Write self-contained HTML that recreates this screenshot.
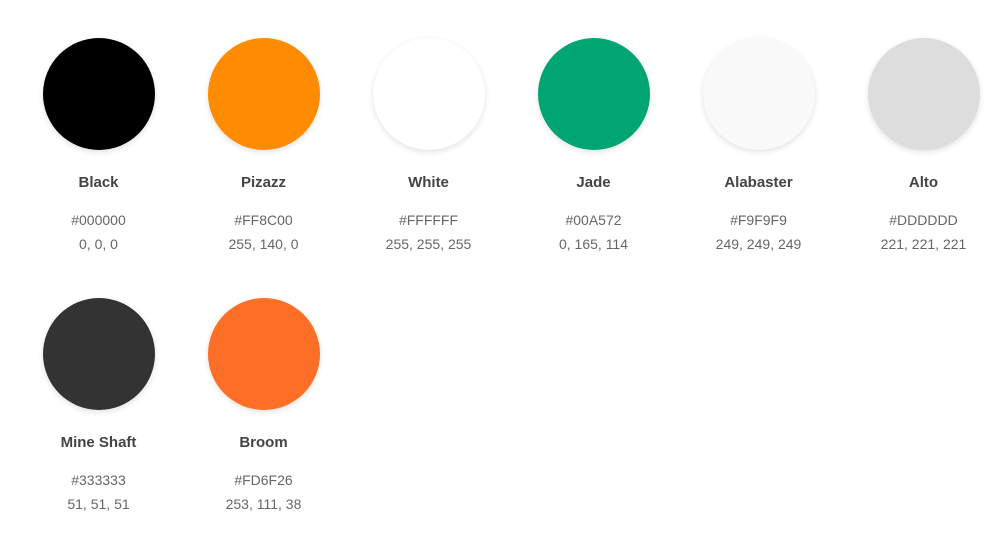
<!DOCTYPE html>
<html><head><style>
html,body{margin:0;background:#fff;width:1008px;height:536px;overflow:hidden;font-family:"Liberation Sans","DejaVu Sans",sans-serif}
.s{position:absolute;width:165px;text-align:center}
.c{width:112px;height:112px;border-radius:50%;margin:0 auto;box-shadow:0 2px 6px rgba(0,0,0,0.12)}
.n{margin-top:24px;font-size:15px;font-weight:bold;color:#444;height:20px}
.h{margin-top:14px;font-size:14px;color:#666;line-height:24px}
</style></head><body>
<div class="s" style="left:16px;top:38px"><div class="c" style="background:#000"></div><div class="n">Black</div><div class="h">#000000<br>0, 0, 0</div></div>
<div class="s" style="left:181px;top:38px"><div class="c" style="background:#FF8C00"></div><div class="n">Pizazz</div><div class="h">#FF8C00<br>255, 140, 0</div></div>
<div class="s" style="left:346px;top:38px"><div class="c" style="background:#fff"></div><div class="n">White</div><div class="h">#FFFFFF<br>255, 255, 255</div></div>
<div class="s" style="left:511px;top:38px"><div class="c" style="background:#00A572"></div><div class="n">Jade</div><div class="h">#00A572<br>0, 165, 114</div></div>
<div class="s" style="left:676px;top:38px"><div class="c" style="background:#F9F9F9"></div><div class="n">Alabaster</div><div class="h">#F9F9F9<br>249, 249, 249</div></div>
<div class="s" style="left:841px;top:38px"><div class="c" style="background:#DDDDDD"></div><div class="n">Alto</div><div class="h">#DDDDDD<br>221, 221, 221</div></div>
<div class="s" style="left:16px;top:298px"><div class="c" style="background:#333"></div><div class="n">Mine Shaft</div><div class="h">#333333<br>51, 51, 51</div></div>
<div class="s" style="left:181px;top:298px"><div class="c" style="background:#FD6F26"></div><div class="n">Broom</div><div class="h">#FD6F26<br>253, 111, 38</div></div>
</body></html>
